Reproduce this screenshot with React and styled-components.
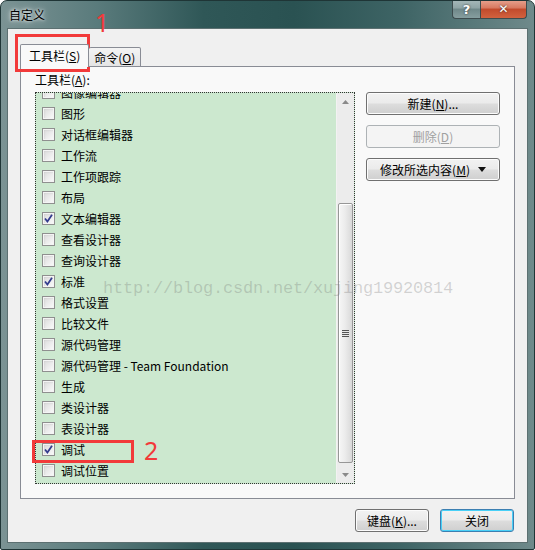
import styled, { createGlobalStyle } from 'styled-components';

const Global = createGlobalStyle`
    body {
        margin: 0;
        background: #fff;
        font-family: "Noto Sans CJK SC", "Noto Sans", sans-serif;
    }
`;

const ITEMS = [
    ['图像编辑器', false],
    ['图形', false],
    ['对话框编辑器', false],
    ['工作流', false],
    ['工作项跟踪', false],
    ['布局', false],
    ['文本编辑器', true],
    ['查看设计器', false],
    ['查询设计器', false],
    ['标准', true],
    ['格式设置', false],
    ['比较文件', false],
    ['源代码管理', false],
    ['源代码管理 - Team Foundation', false],
    ['生成', false],
    ['类设计器', false],
    ['表设计器', false],
    ['调试', true],
    ['调试位置', false],
];

function CheckMark() {
    return (
        <svg width="9" height="9" viewBox="0 0 9 9">
            <path d="M1 4.5 L3.4 7.5 L8 0.8" fill="none" stroke="#333c8e" strokeWidth="1.8" />
        </svg>
    );
}

function Arrow({down}) {
    return (
        <svg width="7" height="4" viewBox="0 0 7 4">
            <path d={down ? 'M0 0 H7 L3.5 4 Z' : 'M0 4 H7 L3.5 0 Z'} fill="#8a8a8a" />
        </svg>
    );
}

export default function App() {
    return (
        <>
            <Global />
            <Window>
                <TitleBar>
                    <Title>自定义</Title>
                    <Caption>
                        <HelpBtn>?</HelpBtn>
                        <CloseBtn>✕</CloseBtn>
                    </Caption>
                </TitleBar>
                <Client>
                    <TabStrip>
                        <Tab $active>工具栏(<u>S</u>)</Tab>
                        <Tab>命令(<u>O</u>)</Tab>
                    </TabStrip>
                    <Panel>
                        <Label>工具栏(<u>A</u>):</Label>
                        <PanelRow>
                            <ListBox>
                                <ListView>
                                    <ListInner>
                                        { ITEMS.map(([name, checked]) => (
                                            <Row key={name}>
                                                <Check>{checked && <CheckMark />}</Check>
                                                <span>{name}</span>
                                            </Row>
                                        )) }
                                    </ListInner>
                                </ListView>
                                <ScrollBar>
                                    <ArrowBox><Arrow /></ArrowBox>
                                    <Track>
                                        <Thumb>
                                            <Grip />
                                        </Thumb>
                                    </Track>
                                    <ArrowBox><Arrow down /></ArrowBox>
                                </ScrollBar>
                            </ListBox>
                            <ButtonColumn>
                                <Button $wide>新建(<u>N</u>)...</Button>
                                <Button $wide disabled>删除(<u>D</u>)</Button>
                                <Button $wide>
                                    修改所选内容(<u>M</u>)
                                    <DropArrow width="8" height="5" viewBox="0 0 8 5">
                                        <path d="M0 0 H8 L4 5 Z" fill="#111" />
                                    </DropArrow>
                                </Button>
                            </ButtonColumn>
                        </PanelRow>
                    </Panel>
                    <Footer>
                        <Button>键盘(<u>K</u>)...</Button>
                        <Button $default>关闭</Button>
                    </Footer>
                </Client>

                <Watermark>http://blog.csdn.net/xujing19920814</Watermark>
                <RedBox style={{left: 14, top: 33, width: 75, height: 38}} />
                <RedNum style={{left: 94, top: 6}}>1</RedNum>
                <RedBox style={{left: 31, top: 439, width: 102, height: 23}} />
                <RedNum style={{left: 143, top: 434}}>2</RedNum>
            </Window>
        </>
    );
}

const Window = styled.div`
    position: relative;
    width: 535px;
    height: 550px;
    box-sizing: border-box;
    display: flex;
    flex-direction: column;
    padding: 0 6px 6px 6px;
    border: 1px solid #1f3536;
    border-radius: 7px 7px 2px 2px;
    background: linear-gradient(90deg, #7b9394 0%, #5a7b7c 18%, #2f5757 38%, #2a5252 55%, #3e6465 75%, #6f8a8b 100%);
    overflow: hidden;
`;

const TitleBar = styled.div`
    height: 27px;
    display: flex;
    justify-content: space-between;
    align-items: flex-start;
`;

const Title = styled.div`
    margin-top: 6px;
    padding-left: 2px;
    font-size: 12px;
    line-height: 16px;
    color: #000;
    text-shadow: 0 0 6px rgba(255, 255, 255, 0.9), 0 0 3px rgba(255, 255, 255, 0.9);
`;

const Caption = styled.div`
    display: flex;
    margin-top: -1px;
    margin-right: 1px;
`;

const CapBtn = styled.div`
    height: 19px;
    display: flex;
    align-items: center;
    justify-content: center;
    box-sizing: border-box;
    border: 1px solid #3d4c4e;
    border-top: none;
    color: #fff;
    font-family: "DejaVu Sans", sans-serif;
    font-weight: bold;
    text-shadow: 0 0 2px #222;
`;

const HelpBtn = styled(CapBtn)`
    width: 28px;
    font-size: 13px;
    border-radius: 0 0 0 4px;
    border-right: none;
    background: linear-gradient(#a7b9ba 0%, #8ea4a5 45%, #6f8889 50%, #869e9f 100%);
`;

const CloseBtn = styled(CapBtn)`
    width: 47px;
    font-size: 12px;
    border-radius: 0 0 4px 0;
    background: linear-gradient(#e7a390 0%, #d7785f 45%, #c24a2c 50%, #d2623f 100%);
`;

const Client = styled.div`
    flex: 1;
    display: flex;
    flex-direction: column;
    padding: 15px 12px 10px 12px;
    background: #f0f0f0;
    border: 1px solid #5c7071;
`;

const TabStrip = styled.div`
    display: flex;
    align-items: flex-end;
    height: 23px;
    margin-bottom: -1px;
    position: relative;
    z-index: 1;
`;

const Tab = styled.div`
    box-sizing: border-box;
    height: ${({$active}) => $active ? 23 : 20}px;
    padding: 0 ${({$active}) => $active ? 8 : 5}px;
    padding-bottom: ${({$active}) => $active ? 2 : 0}px;
    display: flex;
    align-items: center;
    font-size: 12px;
    color: #000;
    border: 1px solid #898c95;
    border-bottom: ${({$active}) => $active ? 'none' : '1px solid #898c95'};
    border-left: ${({$active}) => $active ? '1px solid #898c95' : 'none'};
    border-radius: 2px 2px 0 0;
    background: ${({$active}) => $active ? '#f9f9f9' : 'linear-gradient(#f4f4f4, #e4e4e4)'};
`;

const Panel = styled.div`
    height: 433px;
    box-sizing: border-box;
    border: 1px solid #898c95;
    background: #f9f9f9;
    padding: 4px 14px 0 14px;
    display: flex;
    flex-direction: column;
`;

const Label = styled.div`
    font-size: 12px;
    line-height: 18px;
    height: 18px;
    margin-bottom: 3px;
    color: #000;
`;

const PanelRow = styled.div`
    display: flex;
    gap: 11px;
    align-items: flex-start;
`;

const ListBox = styled.div`
    width: 320px;
    height: 392px;
    flex-shrink: 0;
    box-sizing: border-box;
    border: 1px dotted #333;
    display: flex;
    background: #cce8cf;
`;

const ListView = styled.div`
    flex: 1;
    overflow: hidden;
`;

const ListInner = styled.div`
    margin-top: -11px;
`;

const Row = styled.div`
    height: 21px;
    display: flex;
    align-items: center;
    gap: 6px;
    padding-left: 6px;
    font-size: 12px;
    color: #000;
    white-space: nowrap;
`;

const Check = styled.div`
    width: 13px;
    height: 13px;
    box-sizing: border-box;
    border: 1px solid #8f8f8f;
    background: linear-gradient(135deg, #d9d9d9, #fbfbfb);
    box-shadow: inset 0 0 0 1px #f4f4f4, inset 1px 1px 2px #c6c6c6;
    display: flex;
    align-items: center;
    justify-content: center;
`;

const ScrollBar = styled.div`
    width: 17px;
    display: flex;
    flex-direction: column;
    background: #ececec;
    border-left: 1px solid #f2f2f2;
`;

const ArrowBox = styled.div`
    height: 17px;
    display: flex;
    align-items: center;
    justify-content: center;
`;

const Track = styled.div`
    flex: 1;
    display: flex;
    flex-direction: column;
    align-items: center;
`;

const Thumb = styled.div`
    margin-top: 93px;
    width: 15px;
    height: 260px;
    box-sizing: border-box;
    border: 1px solid #979797;
    border-radius: 2px;
    background: linear-gradient(90deg, #f6f6f6 0%, #ececec 45%, #d9d9d9 100%);
    box-shadow: inset 1px 1px 0 #fff;
    display: flex;
    align-items: center;
    justify-content: center;
`;

const Grip = styled.div`
    width: 7px;
    height: 7px;
    background: repeating-linear-gradient(#555 0 1px, #e8e8e8 1px 2px);
`;

const ButtonColumn = styled.div`
    display: flex;
    flex-direction: column;
    gap: 10px;
`;

const Button = styled.button`
    width: ${({$wide}) => $wide ? 134 : 74}px;
    height: 23px;
    flex-shrink: 0;
    box-sizing: border-box;
    padding: 0;
    display: flex;
    align-items: center;
    justify-content: center;
    font-family: "Noto Sans CJK SC", "Noto Sans", sans-serif;
    font-size: 12px;
    color: #000;
    border: 1px solid ${({$default}) => $default ? '#3c7fb1' : '#707070'};
    border-radius: 3px;
    background: linear-gradient(#f2f2f2 0%, #ebebeb 48%, #dddddd 52%, #cfcfcf 100%);
    box-shadow: inset 0 0 0 1px ${({$default}) => $default ? '#48d0f7' : '#fcfcfc'};

    &:disabled {
        color: #a0a0a0;
        border-color: #adb2b5;
        background: #f4f4f4;
        box-shadow: none;
    }
`;

const DropArrow = styled.svg`
    margin-left: 8px;
`;

const Footer = styled.div`
    display: flex;
    justify-content: flex-end;
    gap: 11px;
    margin-top: 10px;
    padding-right: 1px;
`;

const Watermark = styled.div`
    position: absolute;
    left: 102px;
    top: 279px;
    font-family: "Liberation Mono", monospace;
    font-size: 17px;
    line-height: 17px;
    letter-spacing: -0.2px;
    color: rgba(110, 110, 110, 0.28);
    pointer-events: none;
    white-space: nowrap;
`;

const RedBox = styled.div`
    position: absolute;
    box-sizing: border-box;
    border: 3px solid #f23a3a;
`;

const RedNum = styled.div`
    position: absolute;
    font-family: "Noto Sans", sans-serif;
    font-size: 25px;
    line-height: 30px;
    color: #f23a3a;
`;
